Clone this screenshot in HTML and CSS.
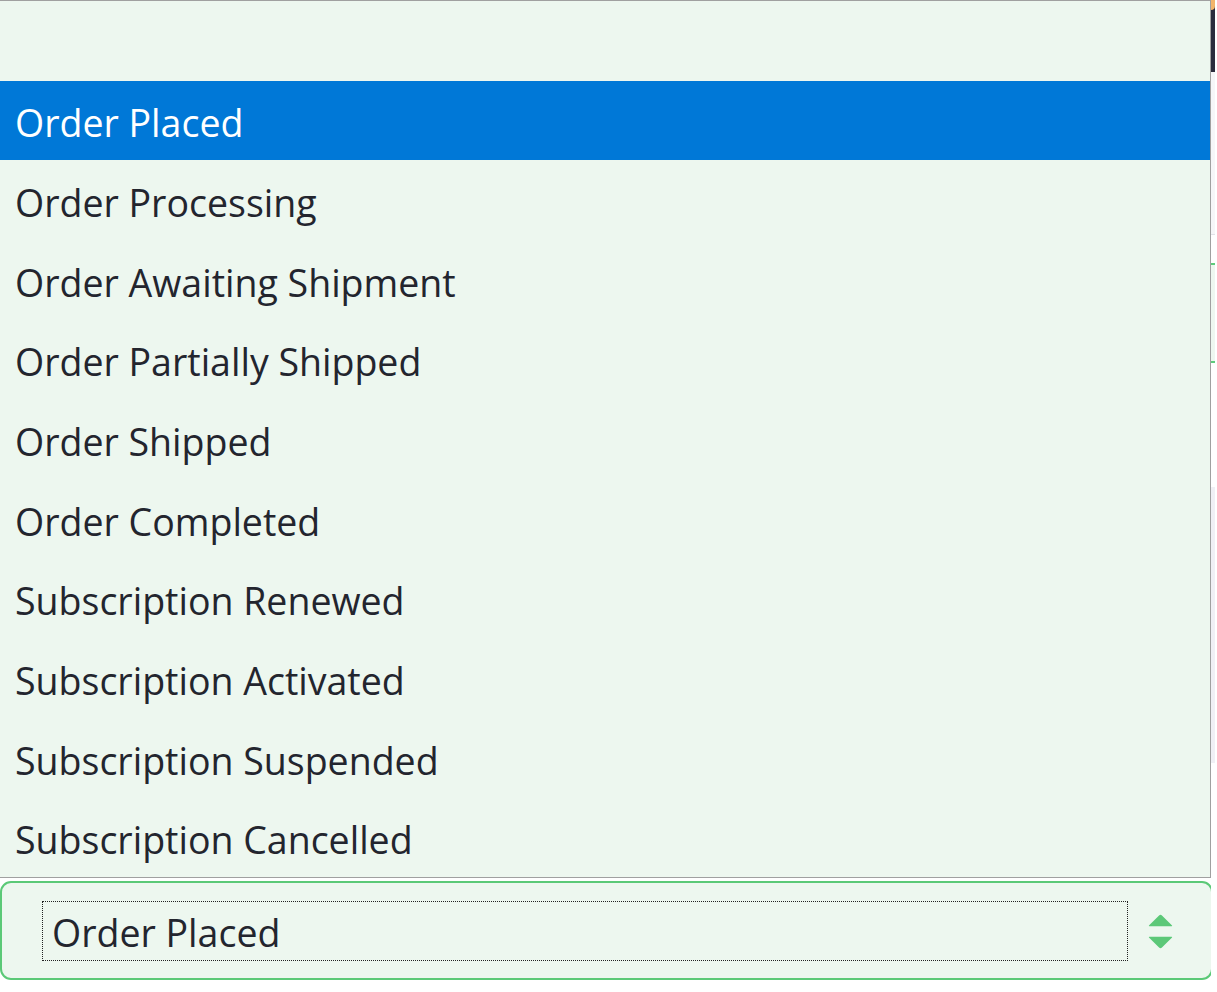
FILE: index.html
```html
<!DOCTYPE html>
<html lang="en">
<head>
<meta charset="utf-8">
<title>Order status</title>
<link rel="stylesheet" href="styles.css">
</head>
<body>
<div class="page">
  <main class="main">
    <div class="spacer"></div>
    <div class="select">
      <div class="select-value">Order Placed</div>
      <svg class="select-arrows" width="25" height="35" viewBox="0 0 24 34" aria-hidden="true">
        <path d="M10.6 1.4 Q12 0 13.4 1.4 L23 11 Q24 12 22.6 12 L1.4 12 Q0 12 1 11 Z" fill="#5cc878"/>
        <path d="M10.6 32.6 Q12 34 13.4 32.6 L23 23 Q24 22 22.6 22 L1.4 22 Q0 22 1 23 Z" fill="#5cc878"/>
      </svg>
    </div>
  </main>
  <aside class="strip">
    <div class="strip-dark"><span class="strip-dot"></span></div>
    <div class="strip-gray"></div>
    <div class="strip-white s1"></div>
    <div class="strip-green"></div>
    <div class="strip-white s2"></div>
    <div class="strip-lav"></div>
    <div class="strip-white s3"></div>
  </aside>
  <ul class="listbox" role="listbox">
    <li class="option"></li>
    <li class="option selected">Order Placed</li>
    <li class="option">Order Processing</li>
    <li class="option">Order Awaiting Shipment</li>
    <li class="option">Order Partially Shipped</li>
    <li class="option">Order Shipped</li>
    <li class="option">Order Completed</li>
    <li class="option">Subscription Renewed</li>
    <li class="option">Subscription Activated</li>
    <li class="option">Subscription Suspended</li>
    <li class="option">Subscription Cancelled</li>
  </ul>
</div>
</body>
</html>
```

FILE: styles.css
```css
html, body {
  margin: 0;
  padding: 0;
  background: #ffffff;
}

body {
  font-family: "Open Sans", "Noto Sans", "Liberation Sans", sans-serif;
  color: #23252e;
}

.page {
  position: relative;
  display: flex;
  width: 1217px;
  height: 992px;
  overflow: hidden;
}

.main {
  width: 1213px;
  display: flex;
  flex-direction: column;
  flex: none;
}

.spacer {
  height: 881px;
  flex: none;
}

.select {
  box-sizing: border-box;
  height: 99px;
  width: 1213px;
  border: 2px solid #5bc977;
  border-radius: 11px;
  background: #edf7ef;
  display: flex;
  align-items: center;
  padding: 0 38px 0 40px;
  gap: 20px;
}

.select-value {
  flex: 1;
  box-sizing: border-box;
  height: 60px;
  border: 1px dotted #222;
  margin-top: 1px;
  padding-left: 9px;
  font-size: 37.5px;
  line-height: 58px;
  color: #23252e;
  padding-top: 2px;
}

.select-arrows {
  flex: none;
  margin-top: 2px;
}

.strip {
  flex: none;
  width: 4px;
  margin-left: -2px;
  position: relative;
  z-index: 0;
  display: flex;
  flex-direction: column;
}

.strip-dark {
  height: 72px;
  background: #2b2c3d;
  position: relative;
}
.strip-dot {
  display: block;
  width: 4px;
  height: 10px;
  background: #f2b56b;
  border-radius: 0 0 4px 0;
}
.strip-gray {
  height: 162px;
  background: #f6f6f8;
  border-bottom: 1px solid #e2e2e8;
}
.strip-white.s1 { height: 28px; }
.strip-green {
  height: 96px;
  background: #eef7f0;
  border-top: 2px solid #5ecb7c;
  border-bottom: 2px solid #5ecb7c;
}
.strip-white.s2 { height: 124px; }
.strip-lav {
  height: 276px;
  background: #f0f0f5;
}
.strip-white.s3 { flex: 1; }
.strip-white { background: #ffffff; }

.listbox {
  position: absolute;
  top: 0;
  left: 0;
  width: 1211px;
  height: 878px;
  box-sizing: border-box;
  margin: 0;
  padding: 0;
  list-style: none;
  background: #edf7ef;
  border: 1px solid #a0a0a0;
  border-left: none;
  display: grid;
  grid-template-rows: repeat(11, 1fr);
  z-index: 2;
}

.option {
  padding: 5px 0 0 15px;
  font-size: 37.5px;
  display: flex;
  align-items: center;
  color: #23252e;
  white-space: nowrap;
}

.option.selected {
  background: #0078d7;
  color: #ffffff;
}
```
